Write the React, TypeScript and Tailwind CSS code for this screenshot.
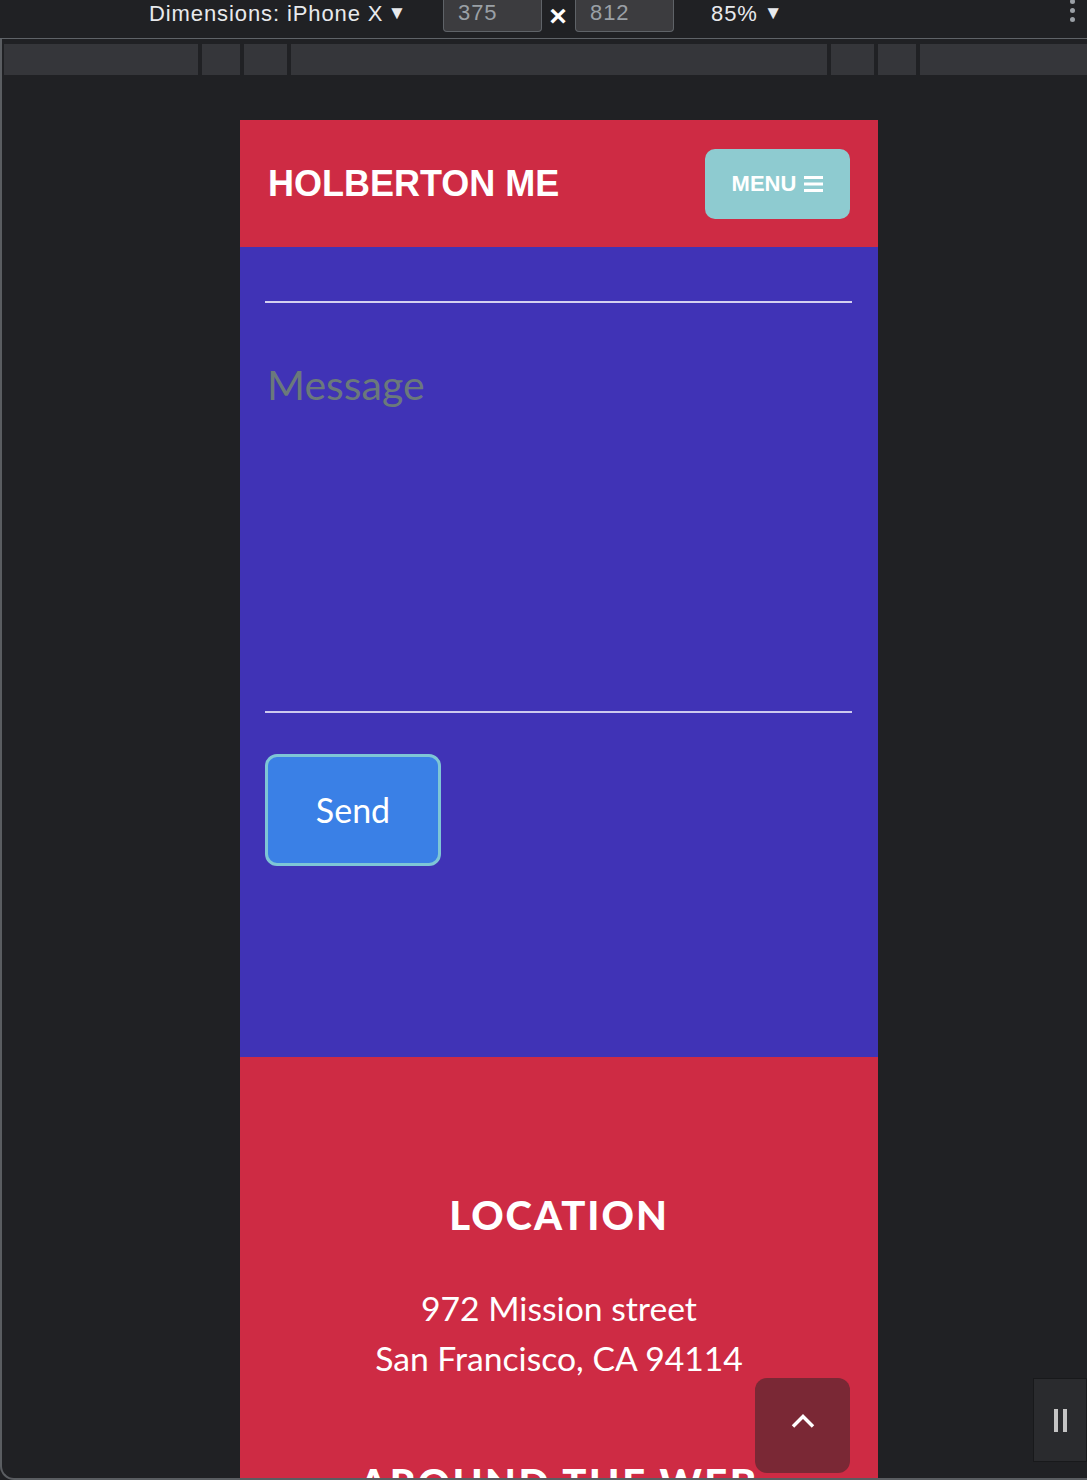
import React from 'react';

const rulerSegments = [194, 38, 43, 536, 43, 38];

const App: React.FC = () => {
  return (
    <div className="relative w-[1087px] h-[1480px] overflow-hidden bg-[#202124] font-['Liberation_Sans',Arial,sans-serif]">
      {/* DevTools toolbar */}
      <div className="flex items-start h-[38px] text-[22px] leading-[24px] tracking-[0.9px]">
        <div className="w-[443px] pl-[149px] mt-[2px] flex items-start text-[#e8eaed]">
          <span>Dimensions: iPhone X</span>
          <span className="ml-[4px] text-[19px] leading-[22px]">▼</span>
        </div>
        <div className="w-[99px] h-[32px] bg-[#3c3c3f] border border-t-0 border-[#5f6368] rounded-b-[4px] pl-[14px] pt-[1px] text-[#9aa0a6]">
          375
        </div>
        <div className="w-[33px] flex justify-center mt-[1px] text-white text-[30px] leading-[30px] font-bold">×</div>
        <div className="w-[99px] h-[32px] bg-[#3c3c3f] border border-t-0 border-[#5f6368] rounded-b-[4px] pl-[14px] pt-[1px] text-[#9aa0a6]">
          812
        </div>
        <div className="ml-[37px] mt-[2px] flex items-start text-[#e8eaed]">
          <span>85%</span>
          <span className="ml-[6px] text-[19px] leading-[22px]">▼</span>
        </div>
        <div className="ml-auto mr-[12px] flex flex-col gap-[4px] -mt-[1px]">
          <span className="w-[5px] h-[5px] rounded-full bg-[#9aa0a6]"></span>
          <span className="w-[5px] h-[5px] rounded-full bg-[#9aa0a6]"></span>
          <span className="w-[5px] h-[5px] rounded-full bg-[#9aa0a6]"></span>
        </div>
      </div>
      <div className="h-[1px] bg-[#5f6368]"></div>

      {/* Emulated viewport */}
      <div className="h-[1441px] border-l-2 border-b-2 border-[#5a5d61] rounded-bl-[14px] overflow-hidden">
        <div className="flex gap-[4px] ml-[2px] mt-[5px] h-[31px]">
          {rulerSegments.map((w, i) => (
            <div key={i} className="bg-[#35363a] h-full" style={{ width: w }}></div>
          ))}
          <div className="flex-1 bg-[#35363a] h-full"></div>
        </div>

        {/* Device page */}
        <div className="ml-[238px] mt-[45px] w-[638px] flex flex-col font-['Lato',sans-serif]">
          {/* Header */}
          <header className="h-[127px] bg-[#ce2b44] flex items-center justify-between px-[28px]">
            <h1 className="text-white text-[36px] leading-none font-bold font-['Liberation_Sans',Arial,sans-serif]">
              HOLBERTON ME
            </h1>
            <button className="w-[145px] h-[70px] rounded-[10px] bg-[#8ecbd0] flex items-center justify-center gap-[8px] text-white text-[22px] font-bold font-['Liberation_Sans',Arial,sans-serif]">
              <span className="leading-none">MENU</span>
              <svg width="19" height="16" viewBox="0 0 19 16">
                <rect x="0" y="0" width="19" height="3" fill="white" />
                <rect x="0" y="6.5" width="19" height="3" fill="white" />
                <rect x="0" y="13" width="19" height="3" fill="white" />
              </svg>
            </button>
          </header>

          {/* Contact form */}
          <section className="h-[810px] bg-[#4033b6] pl-[25px] pr-[26px] pt-[54px]">
            <div className="h-[2px] bg-[#d4d0f0]"></div>
            <div className="h-[408px] pt-[61px] pl-[2px]">
              <div className="text-[41px] leading-none text-[#6b797b]">Message</div>
            </div>
            <div className="h-[2px] bg-[#cdc9ee]"></div>
            <button className="mt-[41px] w-[176px] h-[112px] rounded-[12px] border-[3px] border-[#7ec6d6] bg-[#3a80e6] text-white text-[34px] leading-none flex items-center justify-center">
              Send
            </button>
          </section>

          {/* Footer */}
          <footer className="bg-[#ce2b44] pt-[138px] pb-[40px] flex flex-col items-center text-white">
            <h2 className="text-[40px] leading-none font-black tracking-[2px]">LOCATION</h2>
            <p className="mt-[48px] text-[33.7px] leading-[50px] text-center">
              972 Mission street
              <br />
              San Francisco, CA 94114
            </p>
            <h2 className="mt-[80px] text-[40px] leading-none font-black tracking-[2.5px]">AROUND THE WEB</h2>
          </footer>
        </div>
      </div>

      {/* Back to top button */}
      <button className="absolute left-[755px] top-[1378px] w-[95px] h-[95px] rounded-[12px] bg-[#7a2835] flex items-center justify-center">
        <svg width="24" height="16" viewBox="0 0 24 16" className="-mt-[9px]">
          <path d="M2 13.5 L12 3.5 L22 13.5" fill="none" stroke="white" strokeWidth="3.5" />
        </svg>
      </button>

      {/* Side panel handle */}
      <div className="absolute left-[1033px] top-[1378px] w-[54px] h-[84px] bg-[#2a2b2e] border border-[#18191b] flex items-center justify-center gap-[5px]">
        <span className="w-[4px] h-[23px] bg-[#c4c4c4]"></span>
        <span className="w-[4px] h-[23px] bg-[#c4c4c4]"></span>
      </div>
    </div>
  );
};

export default App;
